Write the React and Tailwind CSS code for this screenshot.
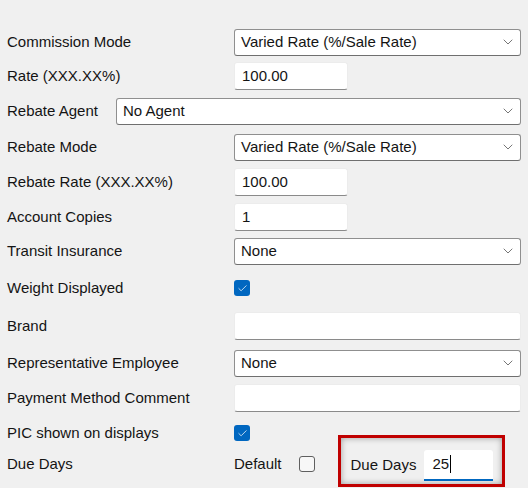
import { ChevronDown, Check } from 'lucide-react';

// ── Windows-style form controls ──────────────────────────────
function Select({ value, className = '' }) {
  return (
    <div
      className={`h-[27px] flex items-center justify-between bg-white border border-[#8f8f8f] border-b-[#6f6f6f] rounded-[3px] pl-[6px] pr-[4px] ${className}`}
    >
      <span>{value}</span>
      <ChevronDown size={16} strokeWidth={1.3} className="text-[#606060]" />
    </div>
  );
}

function TextBox({ value = '', className = '' }) {
  return (
    <div
      className={`h-[28px] flex items-center bg-white border border-[#ececec] border-b-[#8a8a8a] rounded-[3px] pl-[7px] ${className}`}
    >
      {value}
    </div>
  );
}

function CheckBox({ checked }) {
  return checked ? (
    <div className="w-4 h-4 rounded-[3px] bg-[#0067c0] flex items-center justify-center">
      <Check size={11} strokeWidth={1.6} className="text-white" />
    </div>
  ) : (
    <div className="w-4 h-4 rounded-[3px] border border-[#5f5f5f] bg-[#f7f7f7]" />
  );
}

function Row({ label, h, children, wide = false }) {
  return (
    <div className="flex items-center" style={{ height: h }}>
      <div className={`${wide ? 'w-[109px]' : 'w-[227px]'} shrink-0`}>{label}</div>
      {children}
    </div>
  );
}

export default function App() {
  return (
    <div
      className="w-[528px] h-[488px] bg-[#f0f0f0] text-[#141414] text-[15px] pl-[7px] pt-[25px] overflow-hidden"
      style={{ fontFamily: '"Liberation Sans", Arial, sans-serif' }}
    >
      <Row label="Commission Mode" h={34}>
        <Select value="Varied Rate (%/Sale Rate)" className="w-[287px]" />
      </Row>
      <Row label="Rate (XXX.XX%)" h={34}>
        <TextBox value="100.00" className="w-[114px]" />
      </Row>
      <Row label="Rebate Agent" h={36} wide>
        <Select value="No Agent" className="w-[405px]" />
      </Row>
      <Row label="Rebate Mode" h={36}>
        <Select value="Varied Rate (%/Sale Rate)" className="w-[287px]" />
      </Row>
      <Row label="Rebate Rate (XXX.XX%)" h={34}>
        <TextBox value="100.00" className="w-[114px]" />
      </Row>
      <Row label="Account Copies" h={36}>
        <TextBox value="1" className="w-[114px]" />
      </Row>
      <Row label="Transit Insurance" h={32}>
        <Select value="None" className="w-[287px]" />
      </Row>
      <Row label="Weight Displayed" h={42}>
        <CheckBox checked />
      </Row>
      <Row label="Brand" h={34}>
        <TextBox className="w-[287px]" />
      </Row>
      <Row label="Representative Employee" h={40}>
        <Select value="None" className="w-[287px]" />
      </Row>
      <Row label="Payment Method Comment" h={30}>
        <TextBox className="w-[287px]" />
      </Row>
      <Row label="PIC shown on displays" h={40}>
        <CheckBox checked />
      </Row>
      <Row label="Due Days" h={22}>
        <span>Default</span>
        <div className="ml-[17px]">
          <CheckBox />
        </div>
        {/* highlighted field */}
        <div className="ml-[23px] -mt-[6px] h-[52px] w-[167px] shrink-0 border-[3px] border-[#c00000] shadow-[inset_0_0_6px_rgba(0,0,0,0.35)] flex items-center pt-[8px] pl-[10px]">
          <span>Due Days</span>
          <div className="ml-[8px] w-[69px] h-[31px] bg-white border-b-2 border-[#0067c0] rounded-t-[3px] flex items-center pl-[8px]">
            <span>25</span>
            <span className="w-px h-[18px] bg-black ml-px" />
          </div>
        </div>
      </Row>
    </div>
  );
}
